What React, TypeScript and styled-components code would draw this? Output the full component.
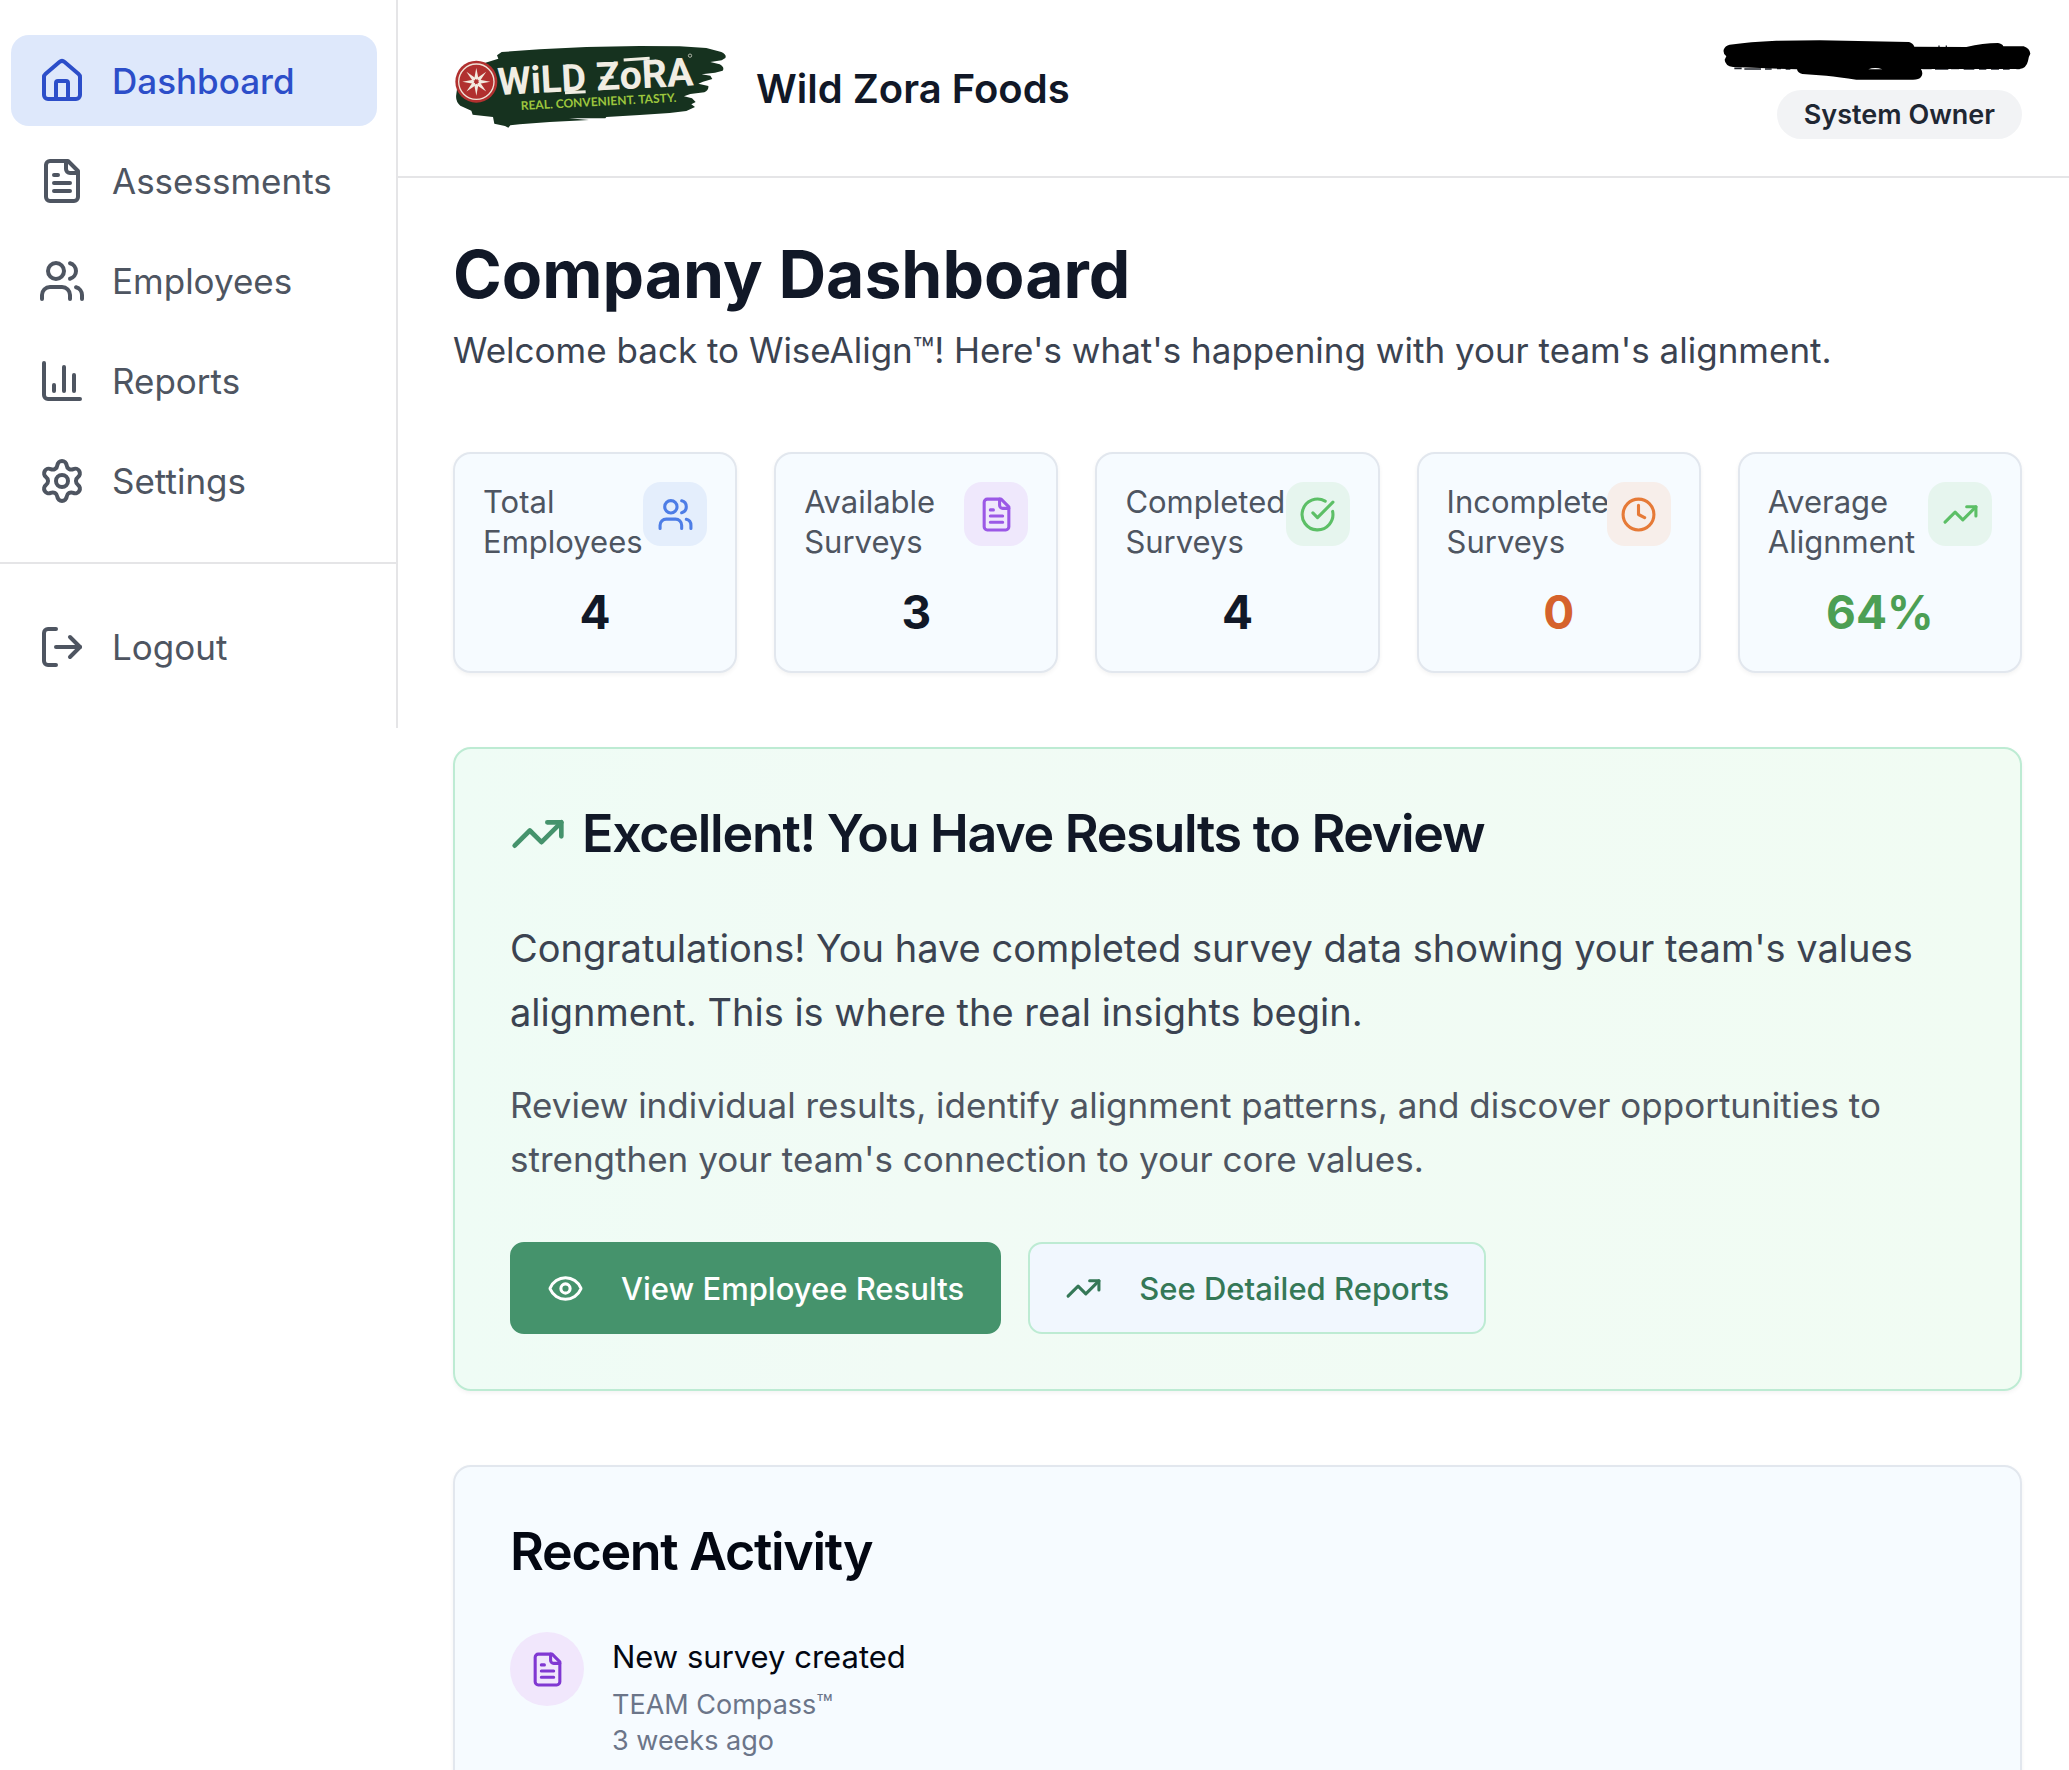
import React from "react";
import styled, { createGlobalStyle } from "styled-components";
import {
  ChartColumn,
  CircleCheckBig,
  Clock,
  Eye,
  House,
  LogOut,
  Settings,
  TrendingUp,
  Users,
} from "lucide-react";

const GlobalStyle = createGlobalStyle`
  *, *::before, *::after { box-sizing: border-box; }
  body {
    margin: 0;
    background: #fff;
    color: #111827;
    font-family: Inter, "Liberation Sans", sans-serif;
    -webkit-font-smoothing: antialiased;
  }
  h1, h2, p, ul, dl, dd, dt { margin: 0; padding: 0; }
  ul { list-style: none; }
  button { font: inherit; cursor: pointer; }
`;

const Page = styled.div`
  display: flex;
  align-items: flex-start;
  height: 100vh;
  overflow: hidden;
`;

const Sidebar = styled.aside`
  flex: 0 0 398px;
  border-right: 2px solid #e5e5e7;
`;

const NavGroup = styled.ul`
  display: flex;
  flex-direction: column;
  gap: 9px;
  padding: 35px 19px 36px 11px;

  & + & {
    border-top: 2px solid #e5e5e7;
    padding-top: 37px;
  }
`;

const NavLink = styled.a<{ $active?: boolean }>`
  display: flex;
  align-items: center;
  gap: 26px;
  height: 91px;
  padding: 0 27px;
  border-radius: 18px;
  font-size: 35px;
  font-weight: ${(p) => (p.$active ? 500 : 400)};
  color: ${(p) => (p.$active ? "#2c4ec9" : "#4e5561")};
  background: ${(p) => (p.$active ? "#dee8fb" : "transparent")};
  text-decoration: none;
`;

const Content = styled.div`
  flex: 1;
  min-width: 0;
`;

const Header = styled.header`
  display: flex;
  align-items: center;
  justify-content: space-between;
  height: 178px;
  padding: 0 47px 0 55px;
  border-bottom: 2px solid #e5e5e7;
`;

const Brand = styled.div`
  display: flex;
  align-items: center;
  gap: 28px;
  font-size: 40px;
  font-weight: 600;
`;

const Account = styled.div`
  display: flex;
  flex-direction: column;
  align-items: flex-end;
  gap: 10px;
`;

const Email = styled.div`
  position: relative;
  width: 298px;
  height: 42px;
`;

const Redaction = styled.svg`
  position: absolute;
  top: 0;
  right: -9px;
`;

const Badge = styled.span`
  height: 49px;
  padding: 0 27px;
  border-radius: 25px;
  background: #f2f3f5;
  color: #1f2733;
  font-size: 27px;
  font-weight: 600;
  line-height: 50px;
`;

const Main = styled.main`
  display: flex;
  flex-direction: column;
  gap: 74px;
  padding: 58px 47px 60px 55px;
`;

const Title = styled.h1`
  font-size: 66px;
  font-weight: 700;
  line-height: 76px;
  color: #111827;
`;

const Subtitle = styled.p`
  margin-top: 10px;
  font-size: 35px;
  line-height: 56px;
  color: #3b4351;
`;

const Stats = styled.dl`
  display: grid;
  grid-template-columns: repeat(5, 1fr);
  gap: 37px;
`;

const Stat = styled.div`
  display: grid;
  grid-template-columns: minmax(0, 1fr) 64px;
  align-content: start;
  padding: 28px 28px 31px;
  border: 2px solid #e2e7ee;
  border-radius: 18px;
  background: #f6fbff;
  box-shadow: 0 2px 4px rgba(0, 0, 0, 0.05);
`;

const StatLabel = styled.dt`
  font-size: 31px;
  line-height: 40px;
  color: #4e5561;
`;

const StatIcon = styled.span<{ $tint: string; $ink: string }>`
  display: grid;
  place-items: center;
  width: 64px;
  height: 64px;
  border-radius: 18px;
  background: ${(p) => p.$tint};
  color: ${(p) => p.$ink};
`;

const StatValue = styled.dd<{ $ink?: string }>`
  grid-column: 1 / -1;
  margin-top: 22px;
  font-size: 46px;
  font-weight: 700;
  line-height: 56px;
  text-align: center;
  color: ${(p) => p.$ink ?? "#111827"};
`;

const Panel = styled.section<{ $success?: boolean }>`
  padding: 55px;
  border: 2px solid ${(p) => (p.$success ? "#bdebd3" : "#e2e7ee")};
  border-radius: 18px;
  background: ${(p) =>
    p.$success ? "linear-gradient(90deg, #effcf5, #f1fbf5 30%, #f1fcf3)" : "#f6fbff"};
  box-shadow: 0 2px 4px rgba(0, 0, 0, 0.05);
`;

const PanelTitle = styled.h2<{ $ink?: string }>`
  display: flex;
  align-items: center;
  gap: 16px;
  font-size: 52px;
  font-weight: 600;
  line-height: 60px;
  letter-spacing: -0.025em;
  color: ${(p) => p.$ink ?? "#111827"};

  svg { color: #45936c; }
`;

const Lead = styled.p`
  margin-top: 52px;
  font-size: 38px;
  line-height: 64px;
  color: #3b4351;
`;

const Detail = styled.p`
  margin-top: 34px;
  font-size: 35px;
  line-height: 54px;
  color: #4e5561;
`;

const Actions = styled.div`
  display: flex;
  gap: 27px;
  margin-top: 56px;
`;

const Action = styled.button<{ $primary?: boolean }>`
  display: inline-flex;
  align-items: center;
  gap: 37px;
  height: 92px;
  padding: 0 35px;
  border: 2px solid ${(p) => (p.$primary ? "#45936c" : "#bdebd3")};
  border-radius: 14px;
  background: ${(p) => (p.$primary ? "#45936c" : "#f1f7fe")};
  color: ${(p) => (p.$primary ? "#fff" : "#357857")};
  font-size: 31px;
  font-weight: 500;
`;

const Activity = styled.li`
  display: flex;
  gap: 28px;
  margin-top: 50px;
`;

const ActivityIcon = styled.span`
  display: grid;
  place-items: center;
  flex: 0 0 74px;
  height: 74px;
  border-radius: 50%;
  background: #f1e7fc;
  color: #8038d2;
`;

const ActivityTitle = styled.p`
  margin-bottom: 5px;
  font-size: 31px;
  line-height: 50px;
  color: #030712;
`;

const ActivityMeta = styled.p`
  font-size: 27px;
  line-height: 36px;
  color: #6b7589;
`;

const FileIcon = ({ size }: { size: number }) => (
  <svg
    width={size}
    height={size}
    viewBox="0 0 24 24"
    fill="none"
    stroke="currentColor"
    strokeWidth="2"
    strokeLinecap="round"
    strokeLinejoin="round"
    aria-hidden="true"
  >
    <path d="M15 2H6a2 2 0 0 0-2 2v16a2 2 0 0 0 2 2h12a2 2 0 0 0 2-2V7Z" />
    <path d="M14 2v4a2 2 0 0 0 2 2h4M10 9H8M16 13H8M16 17H8" />
  </svg>
);

const Logo = () => (
  <svg width="275" height="85" viewBox="40 46 825 255" role="img" aria-label="Wild Zora">
    <path
      fill="#16321f"
      d="M186 64 L300 56 L440 49 L600 46 L720 47 L800 52 L845 64 Q862 72 857 82 L846 89 L812 94 L840 101 Q856 110 849 120 L826 126 L786 131 L812 135 L818 145 L790 153 L776 159 L806 166 Q808 178 794 185 L752 190 L733 197 L757 203 L768 214 L755 221 L766 229 L740 241 L690 247 L600 253 L500 259 L497 263 L388 263 L448 268 L330 274 L240 281 L212 284 L206 291 L196 286 L164 279 L160 259 L99 252 L95 240 L62 225 Q46 212 50 190 L60 120 L176 84 L172 74 Z"
    />
    <circle cx="110" cy="153" r="63" fill="#b1302f" />
    <circle cx="110" cy="153" r="53" fill="none" stroke="#f0e3d8" strokeWidth="4" />
    <g fill="#f3eadf">
      {[0, 45, 90, 135, 180, 225, 270, 315].map((a) => (
        <path key={a} d="M104 143 L110 111 L116 143 L110 147 Z" transform={`rotate(${a} 110 153)`} />
      ))}
    </g>
    <g fill="#f1ede3" fontFamily="Roboto, sans-serif" fontWeight="700" transform="rotate(-3 180 195)">
      <text x="176" y="193" fontSize="114">WiLD</text>
      <text x="472" y="195" fontSize="118">ZoRA</text>
    </g>
    <path d="M376 186 L438 183 M482 142 L522 139 M552 88 L630 83" stroke="#f1ede3" strokeWidth="9" fill="none" />
    <circle cx="751" cy="75" r="5" fill="none" stroke="#f1ede3" strokeWidth="2" />
    <text x="244" y="238" fontSize="36" fontFamily="Lato, sans-serif" fontWeight="700" fill="#9dc63d" transform="rotate(-3 244 238)">
      REAL. CONVENIENT. TASTY.
    </text>
  </svg>
);

const navItems = [
  { label: "Dashboard", icon: <House size={48} />, active: true },
  { label: "Assessments", icon: <FileIcon size={48} /> },
  { label: "Employees", icon: <Users size={48} /> },
  { label: "Reports", icon: <ChartColumn size={48} /> },
  { label: "Settings", icon: <Settings size={48} /> },
];

const stats = [
  { label: "Total Employees", value: "4", icon: <Users size={37} />, tint: "#e4eefc", ink: "#4d7de6" },
  { label: "Available Surveys", value: "3", icon: <FileIcon size={37} />, tint: "#efe8fc", ink: "#9b58e6" },
  { label: "Completed Surveys", value: "4", icon: <CircleCheckBig size={37} />, tint: "#e6f5ee", ink: "#5cbf66" },
  { label: "Incomplete Surveys", value: "0", icon: <Clock size={37} />, tint: "#f7eeea", ink: "#e67a37", valueInk: "#d5622c" },
  { label: "Average Alignment", value: "64%", icon: <TrendingUp size={37} />, tint: "#e6f5ee", ink: "#5cbf66", valueInk: "#4c9f54" },
];

export default function App() {
  return (
    <>
      <GlobalStyle />
      <Page>
        <Sidebar>
          <nav aria-label="Main">
            <NavGroup>
              {navItems.map((item) => (
                <li key={item.label}>
                  <NavLink href="#" $active={item.active}>
                    {item.icon}
                    {item.label}
                  </NavLink>
                </li>
              ))}
            </NavGroup>
            <NavGroup>
              <li>
                <NavLink href="#">
                  <LogOut size={48} />
                  Logout
                </NavLink>
              </li>
            </NavGroup>
          </nav>
        </Sidebar>
        <Content>
          <Header>
            <Brand>
              <Logo />
              <span>Wild Zora Foods</span>
            </Brand>
            <Account>
              <Email>
                <Redaction width="308" height="42" viewBox="70 57 924 126" aria-hidden="true">
                  <path d="M104 148h22M134 150h50M196 150h20M232 148h12M258 150h14M668 148h28M706 150h40M754 148h24M792 150h32M838 150h22M874 150h24M910 150h20M950 148h10M716 82h4M738 82h4" stroke="#20242c" strokeWidth="5" />
                  <path d="M90 77 Q150 68 230 65 L360 64 L628 69 Q640 72 644 83 L800 84 Q850 72 895 72 Q908 74 911 82 L972 82 Q990 88 992 104 Q986 114 985 126 Q980 148 960 150 L664 150 Q672 164 664 174 Q658 182 640 182 L470 182 Q420 174 380 170 L308 165 Q294 162 292 151 L100 144 Q76 140 75 122 L80 112 Q70 106 72 92 Q76 80 90 77 Z" />
                  <path d="M506 151 Q526 143 548 151 Z" fill="#fff" />
                </Redaction>
              </Email>
              <Badge>System Owner</Badge>
            </Account>
          </Header>
          <Main>
            <div>
              <Title>Company Dashboard</Title>
              <Subtitle>Welcome back to WiseAlign™! Here's what's happening with your team's alignment.</Subtitle>
            </div>
            <Stats>
              {stats.map((s) => (
                <Stat key={s.label}>
                  <StatLabel>{s.label}</StatLabel>
                  <StatIcon $tint={s.tint} $ink={s.ink}>{s.icon}</StatIcon>
                  <StatValue $ink={s.valueInk}>{s.value}</StatValue>
                </Stat>
              ))}
            </Stats>
            <Panel $success>
              <PanelTitle>
                <TrendingUp size={56} />
                Excellent! You Have Results to Review
              </PanelTitle>
              <Lead>
                Congratulations! You have completed survey data showing your team's values
                alignment. This is where the real insights begin.
              </Lead>
              <Detail>
                Review individual results, identify alignment patterns, and discover opportunities to
                strengthen your team's connection to your core values.
              </Detail>
              <Actions>
                <Action type="button" $primary>
                  <Eye size={37} />
                  View Employee Results
                </Action>
                <Action type="button">
                  <TrendingUp size={37} />
                  See Detailed Reports
                </Action>
              </Actions>
            </Panel>
            <Panel>
              <PanelTitle $ink="#030712">Recent Activity</PanelTitle>
              <ul>
                <Activity>
                  <ActivityIcon>
                    <FileIcon size={37} />
                  </ActivityIcon>
                  <div>
                    <ActivityTitle>New survey created</ActivityTitle>
                    <ActivityMeta>TEAM Compass™</ActivityMeta>
                    <ActivityMeta>3 weeks ago</ActivityMeta>
                  </div>
                </Activity>
              </ul>
            </Panel>
          </Main>
        </Content>
      </Page>
    </>
  );
}
